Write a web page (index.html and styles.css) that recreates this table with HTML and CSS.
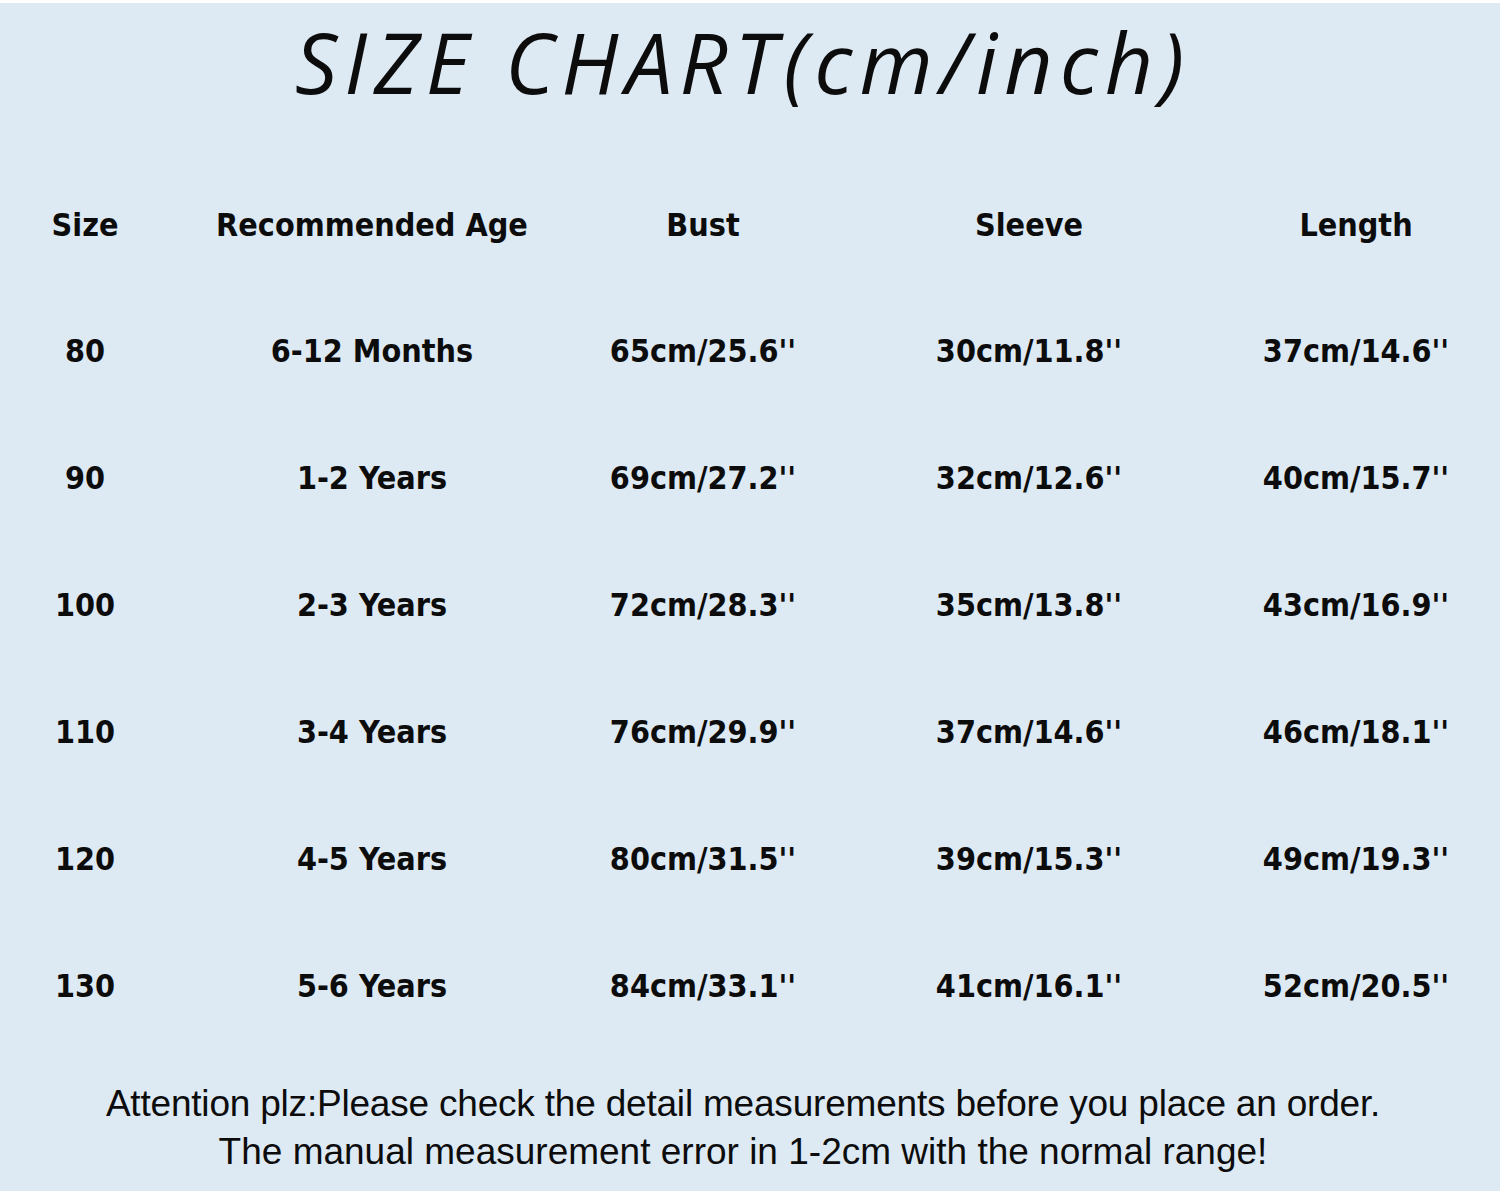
FILE: index.html
```html
<!DOCTYPE html>
<html>
<head>
<meta charset="utf-8">
<link rel="stylesheet" href="styles.css">
</head>
<body>
<div class="page">
  <h1 class="title">SIZE CHART(cm/inch)</h1>
  <div class="chart">
    <div class="cell head">Size</div>
    <div class="cell head">Recommended Age</div>
    <div class="cell head">Bust</div>
    <div class="cell head">Sleeve</div>
    <div class="cell head">Length</div>

    <div class="cell">80</div>
    <div class="cell">6-12 Months</div>
    <div class="cell">65cm/25.6''</div>
    <div class="cell">30cm/11.8''</div>
    <div class="cell">37cm/14.6''</div>

    <div class="cell">90</div>
    <div class="cell">1-2 Years</div>
    <div class="cell">69cm/27.2''</div>
    <div class="cell">32cm/12.6''</div>
    <div class="cell">40cm/15.7''</div>

    <div class="cell">100</div>
    <div class="cell">2-3 Years</div>
    <div class="cell">72cm/28.3''</div>
    <div class="cell">35cm/13.8''</div>
    <div class="cell">43cm/16.9''</div>

    <div class="cell">110</div>
    <div class="cell">3-4 Years</div>
    <div class="cell">76cm/29.9''</div>
    <div class="cell">37cm/14.6''</div>
    <div class="cell">46cm/18.1''</div>

    <div class="cell">120</div>
    <div class="cell">4-5 Years</div>
    <div class="cell">80cm/31.5''</div>
    <div class="cell">39cm/15.3''</div>
    <div class="cell">49cm/19.3''</div>

    <div class="cell">130</div>
    <div class="cell">5-6 Years</div>
    <div class="cell">84cm/33.1''</div>
    <div class="cell">41cm/16.1''</div>
    <div class="cell">52cm/20.5''</div>
  </div>
  <div class="note">
    <p class="line-1">Attention plz:Please check the detail measurements before you place an order.</p>
    <p>The manual measurement error in 1-2cm with the normal range!</p>
  </div>
</div>
</body>
</html>
```

FILE: styles.css
```css
html, body {
  margin: 0;
  padding: 0;
  background: #ffffff;
}

.page {
  width: 1500px;
  height: 1188px;
  margin-top: 3px;
  background: #dde9f3;
  color: #0c0c0c;
  box-sizing: border-box;
  overflow: hidden;
}

.title {
  margin: 0;
  height: 159px;
  box-sizing: border-box;
  padding-top: 9px;
  padding-right: 14px;
  text-align: center;
  font-family: "Open Sans", "DejaVu Sans", sans-serif;
  font-style: italic;
  font-weight: 400;
  font-size: 84px;
  line-height: 100px;
  letter-spacing: 7px;
}

.chart {
  display: grid;
  grid-template-columns: 170px 404px 258px 394px 260px;
  grid-template-rows: 125px repeat(6, 127px);
  font-family: "DejaVu Sans", sans-serif;
  font-stretch: condensed;
  font-weight: 700;
  font-size: 32px;
}

.cell {
  display: flex;
  align-items: center;
  justify-content: center;
  white-space: nowrap;
}

.note {
  padding-top: 31px;
  padding-right: 14px;
  text-align: center;
  font-family: "Liberation Sans Narrow", "Liberation Sans", sans-serif;
  font-size: 37px;
  line-height: 48px;
}

.note p {
  margin: 0;
}

.note .line-1 {
  letter-spacing: -0.2px;
}
```
